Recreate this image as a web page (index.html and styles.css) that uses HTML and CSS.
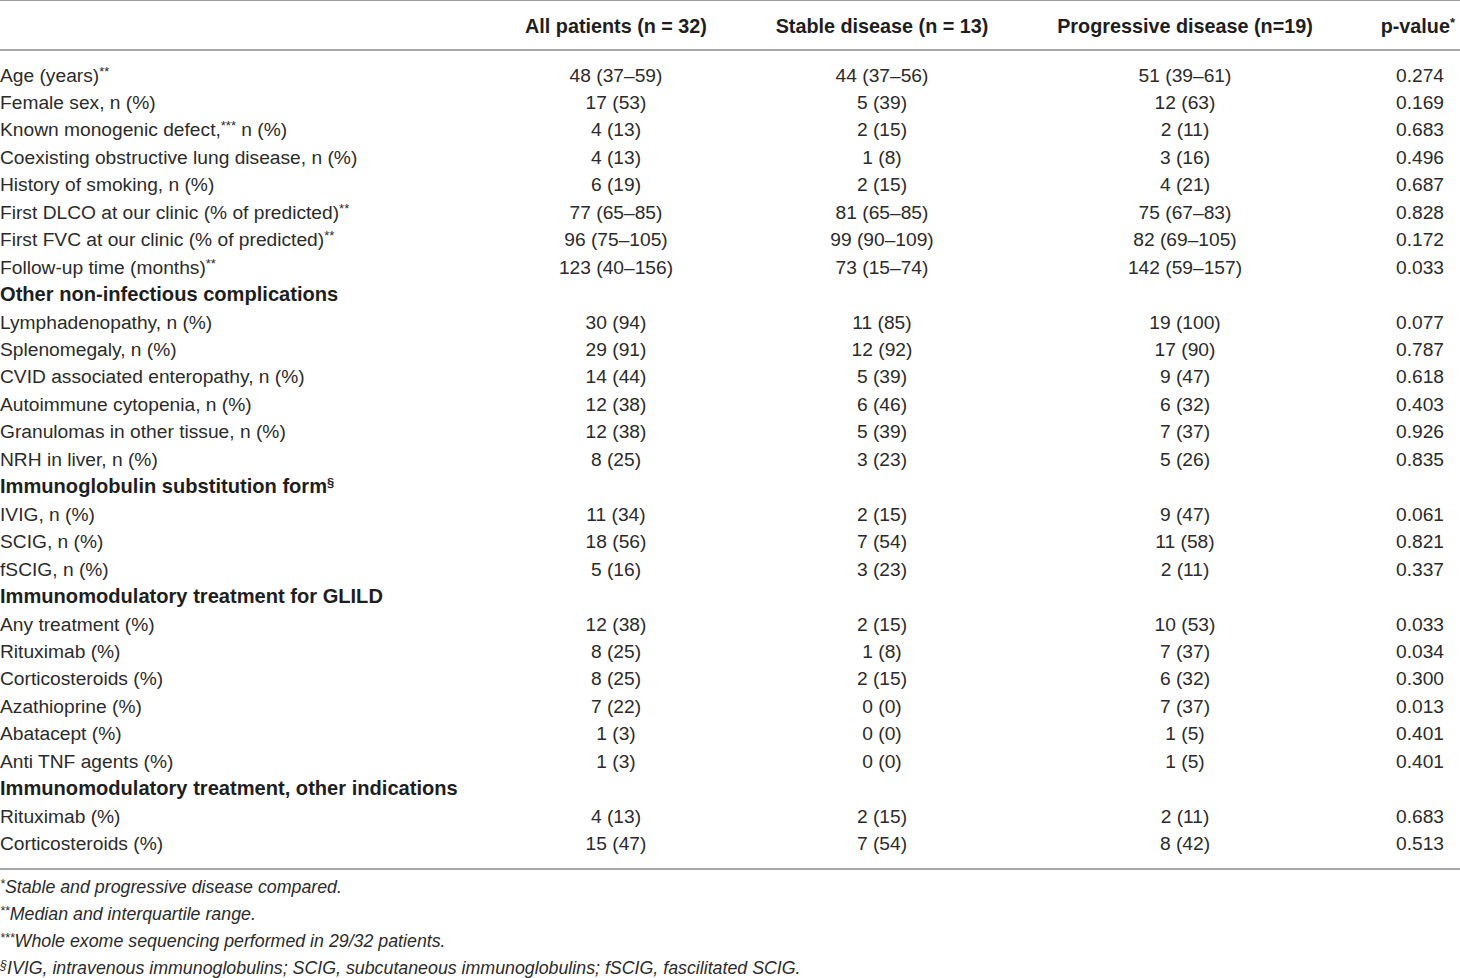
FILE: index.html
```html
<!DOCTYPE html>
<html lang="en">
<head>
<meta charset="utf-8">
<title>Table</title>
<link rel="stylesheet" href="styles.css">
</head>
<body>
<table class="tbl">
  <colgroup>
    <col class="c1"><col class="c2"><col class="c3"><col class="c4"><col class="c5">
  </colgroup>
  <thead>
    <tr>
      <th class="lbl"></th>
      <th>All patients (n = 32)</th>
      <th>Stable disease (n = 13)</th>
      <th>Progressive disease (n=19)</th>
      <th class="pv">p-value<sup>*</sup></th>
    </tr>
  </thead>
  <tbody>
    <tr class="first"><td class="lbl">Age (years)<sup>**</sup></td><td>48 (37–59)</td><td>44 (37–56)</td><td>51 (39–61)</td><td class="pv">0.274</td></tr>
    <tr><td class="lbl">Female sex, n (%)</td><td>17 (53)</td><td>5 (39)</td><td>12 (63)</td><td class="pv">0.169</td></tr>
    <tr><td class="lbl">Known monogenic defect,<sup>***</sup> n (%)</td><td>4 (13)</td><td>2 (15)</td><td>2 (11)</td><td class="pv">0.683</td></tr>
    <tr><td class="lbl">Coexisting obstructive lung disease, n (%)</td><td>4 (13)</td><td>1 (8)</td><td>3 (16)</td><td class="pv">0.496</td></tr>
    <tr><td class="lbl">History of smoking, n (%)</td><td>6 (19)</td><td>2 (15)</td><td>4 (21)</td><td class="pv">0.687</td></tr>
    <tr><td class="lbl">First DLCO at our clinic (% of predicted)<sup>**</sup></td><td>77 (65–85)</td><td>81 (65–85)</td><td>75 (67–83)</td><td class="pv">0.828</td></tr>
    <tr><td class="lbl">First FVC at our clinic (% of predicted)<sup>**</sup></td><td>96 (75–105)</td><td>99 (90–109)</td><td>82 (69–105)</td><td class="pv">0.172</td></tr>
    <tr><td class="lbl">Follow-up time (months)<sup>**</sup></td><td>123 (40–156)</td><td>73 (15–74)</td><td>142 (59–157)</td><td class="pv">0.033</td></tr>
    <tr class="sec"><td class="lbl">Other non-infectious complications</td><td></td><td></td><td></td><td></td></tr>
    <tr><td class="lbl">Lymphadenopathy, n (%)</td><td>30 (94)</td><td>11 (85)</td><td>19 (100)</td><td class="pv">0.077</td></tr>
    <tr><td class="lbl">Splenomegaly, n (%)</td><td>29 (91)</td><td>12 (92)</td><td>17 (90)</td><td class="pv">0.787</td></tr>
    <tr><td class="lbl">CVID associated enteropathy, n (%)</td><td>14 (44)</td><td>5 (39)</td><td>9 (47)</td><td class="pv">0.618</td></tr>
    <tr><td class="lbl">Autoimmune cytopenia, n (%)</td><td>12 (38)</td><td>6 (46)</td><td>6 (32)</td><td class="pv">0.403</td></tr>
    <tr><td class="lbl">Granulomas in other tissue, n (%)</td><td>12 (38)</td><td>5 (39)</td><td>7 (37)</td><td class="pv">0.926</td></tr>
    <tr><td class="lbl">NRH in liver, n (%)</td><td>8 (25)</td><td>3 (23)</td><td>5 (26)</td><td class="pv">0.835</td></tr>
    <tr class="sec"><td class="lbl">Immunoglobulin substitution form<sup>§</sup></td><td></td><td></td><td></td><td></td></tr>
    <tr><td class="lbl">IVIG, n (%)</td><td>11 (34)</td><td>2 (15)</td><td>9 (47)</td><td class="pv">0.061</td></tr>
    <tr><td class="lbl">SCIG, n (%)</td><td>18 (56)</td><td>7 (54)</td><td>11 (58)</td><td class="pv">0.821</td></tr>
    <tr><td class="lbl">fSCIG, n (%)</td><td>5 (16)</td><td>3 (23)</td><td>2 (11)</td><td class="pv">0.337</td></tr>
    <tr class="sec"><td class="lbl">Immunomodulatory treatment for GLILD</td><td></td><td></td><td></td><td></td></tr>
    <tr><td class="lbl">Any treatment (%)</td><td>12 (38)</td><td>2 (15)</td><td>10 (53)</td><td class="pv">0.033</td></tr>
    <tr><td class="lbl">Rituximab (%)</td><td>8 (25)</td><td>1 (8)</td><td>7 (37)</td><td class="pv">0.034</td></tr>
    <tr><td class="lbl">Corticosteroids (%)</td><td>8 (25)</td><td>2 (15)</td><td>6 (32)</td><td class="pv">0.300</td></tr>
    <tr><td class="lbl">Azathioprine (%)</td><td>7 (22)</td><td>0 (0)</td><td>7 (37)</td><td class="pv">0.013</td></tr>
    <tr><td class="lbl">Abatacept (%)</td><td>1 (3)</td><td>0 (0)</td><td>1 (5)</td><td class="pv">0.401</td></tr>
    <tr><td class="lbl">Anti TNF agents (%)</td><td>1 (3)</td><td>0 (0)</td><td>1 (5)</td><td class="pv">0.401</td></tr>
    <tr class="sec"><td class="lbl">Immunomodulatory treatment, other indications</td><td></td><td></td><td></td><td></td></tr>
    <tr><td class="lbl">Rituximab (%)</td><td>4 (13)</td><td>2 (15)</td><td>2 (11)</td><td class="pv">0.683</td></tr>
    <tr class="last"><td class="lbl">Corticosteroids (%)</td><td>15 (47)</td><td>7 (54)</td><td>8 (42)</td><td class="pv">0.513</td></tr>
  </tbody>
</table>
<div class="notes">
  <p><sup>*</sup>Stable and progressive disease compared.</p>
  <p><sup>**</sup>Median and interquartile range.</p>
  <p><sup>***</sup>Whole exome sequencing performed in 29/32 patients.</p>
  <p><sup>§</sup>IVIG, intravenous immunoglobulins; SCIG, subcutaneous immunoglobulins; fSCIG, fascilitated SCIG.</p>
</div>
</body>
</html>
```

FILE: styles.css
```css
html, body {
  margin: 0;
  padding: 0;
  background: #ffffff;
}
body {
  font-family: "Liberation Sans", Arial, Helvetica, sans-serif;
  color: #2b2b2b;
  font-size: 19.2px;
  width: 1460px;
}
.tbl {
  width: 1460px;
  border-collapse: collapse;
  table-layout: fixed;
  border-top: 1px solid #9c9c9c;
  border-bottom: 2px solid #a8a8a8;
}
.c1 { width: 490px; }
.c2 { width: 252px; }
.c3 { width: 280px; }
.c4 { width: 326px; }
.c5 { width: 112px; }
th, td {
  padding: 0;
  text-align: center;
  white-space: nowrap;
  font-weight: normal;
}
thead th {
  height: 49px;
  padding-top: 3px;
  box-sizing: border-box;
  font-weight: bold;
  font-size: 19.8px;
  color: #1e1e1e;
  border-bottom: 2px solid #a8a8a8;
  vertical-align: middle;
}
thead th.pv { padding-right: 5px; }
tbody td {
  height: 27.46px;
  line-height: 27.46px;
}
tbody tr.first td { padding-top: 11px; }
tbody tr.last td { padding-bottom: 10px; }
td.lbl, th.lbl { text-align: left; }
td.pv, th.pv { text-align: right; }
td.pv { padding-right: 16px; }
tr.sec td.lbl { font-weight: bold; color: #1e1e1e; font-size: 20.1px; }
sup {
  font-size: 13px;
  line-height: 0;
  vertical-align: 6px;
}
.notes {
  margin-top: 4px;
  font-style: italic;
  font-size: 17.8px;
}
.notes p {
  margin: 0;
  line-height: 27px;
}
.notes sup {
  font-size: 12.5px;
  vertical-align: 5px;
}
```
